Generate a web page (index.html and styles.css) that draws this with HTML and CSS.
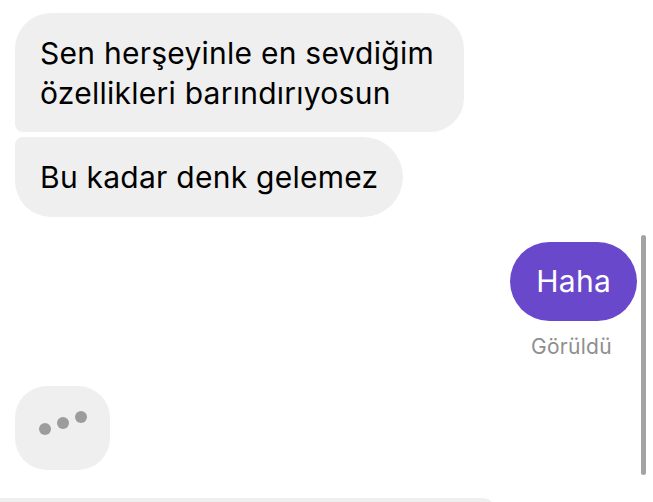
FILE: index.html
```html
<!DOCTYPE html>
<html lang="tr">
<head>
<meta charset="utf-8">
<title>Sohbet</title>
<link rel="stylesheet" href="styles.css">
</head>
<body>
<div class="chat">
  <div class="msg in first">Sen herşeyinle en sevdiğim özellikleri barındırıyosun</div>
  <div class="msg in last">Bu kadar denk gelemez</div>
  <div class="msg out">Haha</div>
  <div class="seen">Görüldü</div>
  <div class="typing">
    <span class="dot d1"></span><span class="dot d2"></span><span class="dot d3"></span>
  </div>
  <div class="composer"></div>
  <div class="scrollbar"></div>
</div>
</body>
</html>
```

FILE: styles.css
```css
* { box-sizing: border-box; }
html, body {
  margin: 0;
  padding: 0;
  background: #ffffff;
  height: 100%;
  overflow: hidden;
}
.chat {
  position: relative;
  display: flex;
  flex-direction: column;
  align-items: flex-start;
  padding: 13px 16px 0 15px;
  font-family: "Inter", "Liberation Sans", sans-serif;
  height: 502px;
}
.chat > * { flex-shrink: 0; }
.msg {
  font-size: 30px;
  letter-spacing: 0.25px;
  line-height: 40px;
  padding: 20px 25px;
  color: #000;
}
.msg.in {
  background: #efefef;
  max-width: 449px;
}
.msg.first {
  padding-bottom: 19px;
  border-radius: 36px 36px 34px 8px;
}
.msg.last {
  margin-top: 5px;
  border-radius: 8px 40px 40px 36px;
}
.msg.out {
  align-self: flex-end;
  margin-top: 25px;
  background: #6a48cb;
  color: #ffffff;
  border-radius: 40px;
  padding: 19px 26px 20px;
  margin-right: 0;
}
.seen {
  align-self: flex-end;
  margin-right: 25px;
  margin-top: 13px;
  font-size: 21px;
  letter-spacing: 0.3px;
  line-height: 26px;
  color: #8e8e8e;
}
.typing {
  margin-top: 26px;
  width: 95px;
  height: 84px;
  border-radius: 32px;
  background: #efefef;
  position: relative;
}
.dot {
  position: absolute;
  width: 12px;
  height: 12px;
  border-radius: 50%;
  background: #9c9c9c;
}
.d1 { left: 24px; top: 37px; }
.d2 { left: 42px; top: 31px; }
.d3 { left: 60px; top: 25px; }
.composer {
  margin-top: 28px;
  margin-left: -15px;
  width: 492px;
  height: 5px;
  background: #efefef;
  border-top-right-radius: 12px 5px;
}
.scrollbar {
  position: absolute;
  left: 641px;
  top: 235px;
  width: 5px;
  height: 240px;
  border-radius: 3px;
  background: #a3a3a3;
}
```
